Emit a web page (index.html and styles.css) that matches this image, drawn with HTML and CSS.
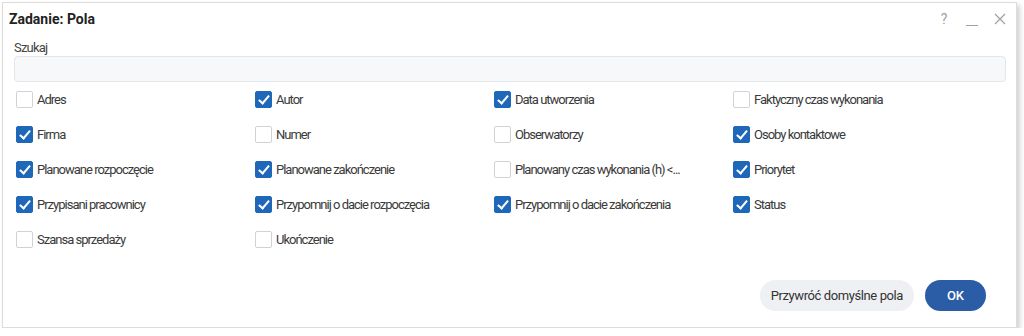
FILE: index.html
```html
<!DOCTYPE html>
<html lang="pl">

<head>
    <meta charset="UTF-8">
    <meta name="viewport" content="width=device-width, initial-scale=1.0">
    <title>Zadanie: Pola</title>
    <link rel="stylesheet" href="styles.css">
</head>

<body>
    <div class="dialog">
        <div class="header">
            <div class="title">Zadanie: Pola</div>
            <div class="tools">
                <span class="tool">?</span>
                <span class="tool min"></span>
                <span class="tool">
                    <svg width="12" height="12" viewBox="0 0 12 12"><path d="M1 1L11 11M11 1L1 11" stroke="#a0a0a0" stroke-width="1.2" fill="none"/></svg>
                </span>
            </div>
        </div>
        <div class="body">
            <label class="search-label">Szukaj</label>
            <input class="search" type="text">
            <div class="fields">
                <div class="field"><span class="box"></span>Adres</div>
                <div class="field"><span class="box checked"></span>Autor</div>
                <div class="field"><span class="box checked"></span>Data utworzenia</div>
                <div class="field"><span class="box"></span>Faktyczny czas wykonania</div>

                <div class="field"><span class="box checked"></span>Firma</div>
                <div class="field"><span class="box"></span>Numer</div>
                <div class="field"><span class="box"></span>Obserwatorzy</div>
                <div class="field"><span class="box checked"></span>Osoby kontaktowe</div>

                <div class="field"><span class="box checked"></span>Planowane rozpoczęcie</div>
                <div class="field"><span class="box checked"></span>Planowane zakończenie</div>
                <div class="field"><span class="box"></span>Planowany czas wykonania (h) &lt;...</div>
                <div class="field"><span class="box checked"></span>Priorytet</div>

                <div class="field"><span class="box checked"></span>Przypisani pracownicy</div>
                <div class="field"><span class="box checked"></span>Przypomnij o dacie rozpoczęcia</div>
                <div class="field"><span class="box checked"></span>Przypomnij o dacie zakończenia</div>
                <div class="field"><span class="box checked"></span>Status</div>

                <div class="field"><span class="box"></span>Szansa sprzedaży</div>
                <div class="field"><span class="box"></span>Ukończenie</div>
            </div>
        </div>
        <div class="footer">
            <button class="btn">Przywróć domyślne pola</button>
            <button class="btn primary">OK</button>
        </div>
    </div>
</body>

</html>
```

FILE: styles.css
```css
* {
    margin: 0;
    padding: 0;
    box-sizing: border-box;
}

body {
    background-color: #fff;
    font-family: Roboto, "Noto Sans", sans-serif;
    color: #333;
    padding: 2px 0 0 2px;
}

.dialog {
    width: 1015px;
    height: 326px;
    border: 1px solid #dcdcdc;
    background-color: #fff;
    box-shadow: 3px 3px 5px rgba(0, 0, 0, 0.18);
    display: flex;
    flex-direction: column;
}

.header {
    height: 31px;
    display: flex;
    align-items: center;
    justify-content: space-between;
    padding: 0 10px 0 6px;
}

.title {
    font-size: 14px;
    font-weight: bold;
    color: #222;
}

.tools {
    display: flex;
    align-items: center;
    gap: 16px;
}

.tool {
    color: #a0a0a0;
    font-size: 14px;
    width: 12px;
    display: flex;
    justify-content: center;
    align-items: center;
    height: 14px;
}

.min::after {
    content: "";
    width: 12px;
    border-bottom: 1px solid #a0a0a0;
    margin-top: 14px;
}

.body {
    padding: 6px 10px 0 11px;
    flex: 1;
}

.search-label {
    display: block;
    font-size: 13px;
    letter-spacing: -0.8px;
    color: #444;
    height: 16px;
}

.search {
    display: block;
    width: 992px;
    height: 26px;
    border: 1px solid #e3e7ec;
    border-radius: 4px;
    background-color: #f6f8fa;
    outline: none;
}

.fields {
    display: grid;
    grid-template-columns: repeat(4, 239px);
    grid-auto-rows: 35px;
    margin-top: 0;
    padding-left: 2px;
}

.field {
    display: flex;
    align-items: center;
    font-size: 13px;
    letter-spacing: -1px;
    color: #3a3a3a;
}

.box {
    width: 17px;
    height: 17px;
    border: 1px solid #cfd3d8;
    border-radius: 2px;
    margin-right: 4px;
    flex-shrink: 0;
    position: relative;
}

.box.checked {
    background-color: #1f68b9;
    border-color: #1f68b9;
}

.box.checked::after {
    content: "";
    position: absolute;
    left: 5px;
    top: 1px;
    width: 4px;
    height: 9px;
    border: solid #fff;
    border-width: 0 2px 2px 0;
    transform: rotate(40deg);
}

.footer {
    display: flex;
    justify-content: flex-end;
    gap: 11px;
    padding: 0 30px 16px 0;
}

.btn {
    height: 31px;
    border: none;
    border-radius: 16px;
    padding: 0 11px;
    font-family: Roboto, "Noto Sans", sans-serif;
    font-size: 13px;
    letter-spacing: -0.4px;
    color: #333;
    background-color: #eef0f4;
}

.btn.primary {
    width: 61px;
    background-color: #2a5da6;
    color: #fff;
    font-weight: 500;
    letter-spacing: 0;
}
```
